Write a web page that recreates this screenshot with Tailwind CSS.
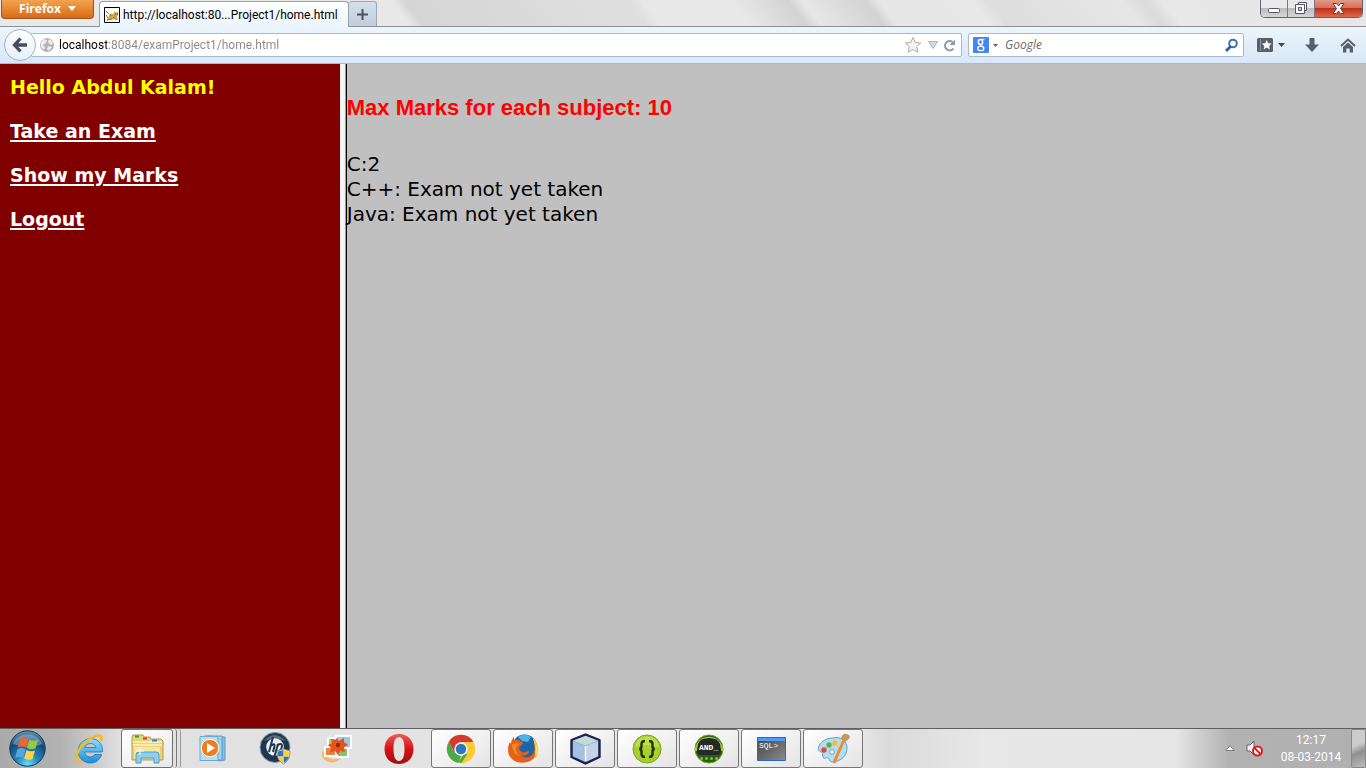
<!DOCTYPE html>
<html lang="en">
<head>
<meta charset="utf-8">
<title>home.html</title>
<script src="https://cdn.jsdelivr.net/npm/@tailwindcss/browser@4"></script>
</head>
<body class="flex h-screen flex-col overflow-hidden bg-[#c0c0c0] font-['Noto_Sans','Open_Sans',sans-serif] text-[12px]">

<!-- Title bar -->
<header class="flex h-[27px] shrink-0 items-start border-b border-[#8e8e8e] bg-[linear-gradient(52deg,#e9e9e9_0px,#e8e8e8_324px,#d5d5d5_334px,#e0e0e0_512px,#e8e8e8_522px,#e8e8e8_592px,#d3d3d3_636px,#e7e7e7_648px,#d3d3d3_697px,#e7e7e7_708px,#e8e8e8_782px,#dedede_794px,#e6e6e6_900px,#dadada_916px,#e8e8e8_932px,#e6e6e6_1090px)] pl-px">
  <button class="flex h-[19px] w-[93px] items-center justify-center gap-[7px] rounded-b-[4px] border border-t-0 border-[#a2541a] bg-linear-to-b from-[#f0a34d] to-[#da6a10] pb-px font-['Open_Sans',sans-serif] text-[12px] leading-none font-bold text-white">Firefox
    <svg class="h-[5px] w-[8px]" viewBox="0 0 8 5"><path d="M0 0h8L4 5z" fill="#fff"/></svg>
  </button>
  <nav class="ml-[5px] flex h-[27px] items-start pt-px">
    <a href="#" class="flex h-[26px] w-[250px] items-center gap-[3px] rounded-t-[4px] border border-b-0 border-[#98a0a8] bg-linear-to-b from-white to-[#ebf4fc] pl-1 font-['Roboto',sans-serif] whitespace-nowrap text-black">
      <svg class="size-4 shrink-0" viewBox="0 0 16 16"><path d="M.5.5h15v15H.5z" fill="#fff" stroke="#000" /><path d="M4 11l2-4 4 0 0-3 1.500 1.500h1.500L14 4v4l-1 2 1 3-3-1-4 1-5 .5z" fill="#d2a44c"/><path d="M2 4l3 3M2 8l2 3M6 7l1 2M9 10l4 3M3 13l5-1" stroke="#8b7550"/><path d="M11 7h1M13 7h1" stroke="#333"/></svg>
      <span>http://localhost:80...Project1/home.html</span>
    </a>
    <button aria-label="New tab" class="flex h-[25px] w-[28px] items-center justify-center rounded-t-[3px] border border-b-0 border-l-0 border-[#9aa6b4] bg-linear-to-b from-[#d5e0ec] to-[#bfcddc]">
      <svg class="size-[11px]" viewBox="0 0 11 11"><path d="M5.5 0v11M0 5.5h11" stroke="#4b5560" stroke-width="2"/></svg>
    </button>
  </nav>
  <div class="mr-[3px] ml-auto flex h-[18px] overflow-hidden rounded-b-[5px] border border-t-0 border-[#63636b]">
    <button aria-label="Minimize" class="flex w-[27px] items-center justify-center border-r border-[#77777f] bg-[linear-gradient(#e9e9e9_45%,#bcbcbe_50%,#d6d6d6)] pt-1">
      <svg class="h-[5px] w-[12px]" viewBox="0 0 12 5"><rect x=".5" y=".5" width="11" height="4" rx="1" fill="#fff" stroke="#55556a"/></svg>
    </button>
    <button aria-label="Restore" class="flex w-[27px] items-center justify-center border-r border-[#77777f] bg-[linear-gradient(#e9e9e9_45%,#bcbcbe_50%,#d6d6d6)] pb-px">
      <svg class="size-[12px]" viewBox="0 0 12 12" stroke="#55556a"><path d="M3.500 .5h8v8h-8z" fill="#fff"/><path d="M.5 2.500h9v9h-9z" fill="#fff"/><path d="M3.500 5.500h3v3h-3z" fill="#ccc"/></svg>
    </button>
    <button aria-label="Close" class="flex w-[47px] items-center justify-center bg-[linear-gradient(#e39a86_0%,#d6705a_45%,#bf2f1a_50%,#dd6a48)] pb-px">
      <svg class="h-[11px] w-[13px]" viewBox="0 0 13 11"><path d="M1 .5h3.500l2 2.500 2-2.500H12L8.500 5.500l3.500 5H8.500l-2-2.500-2 2.500H1l3.500-5z" fill="#fff" stroke="#55424f" stroke-linejoin="round"/></svg>
    </button>
  </div>
</header>

<!-- Navigation toolbar -->
<div class="flex h-[37px] shrink-0 items-center border-b border-[#a3b9d4] bg-linear-to-b from-[#ebf5fc] to-[#d8e7f8] pl-1">
  <button aria-label="Back" class="relative z-10 flex size-8 shrink-0 items-center justify-center rounded-full border border-[#a0b2c8] bg-linear-to-b from-white to-[#e6eff8]">
    <svg class="h-[16px] w-[16px]" viewBox="0 0 16 16"><path d="M8.500 1.500L2.500 8l6 6.500M2.500 8H15" fill="none" stroke="#434f5e" stroke-width="3.300"/></svg>
  </button>
  <div class="-ml-[5px] flex h-6 min-w-0 flex-1 items-center rounded-r-[2px] border border-[#a9bacf] bg-white pl-[7px]">
    <svg class="mr-1 size-4 shrink-0" viewBox="0 0 16 16"><circle cx="8" cy="8" r="7" fill="#b3b3b3"/><path d="M2 5l3-3 3 1-1 3-3 2 2 2-1 3-3-3zM10 2l4 3-1 3-3-1-1-3zM9 9l4 1-3 4-2-2z" fill="#ececec"/></svg>
    <input aria-label="Address" value="localhost:8084/examProject1/home.html" class="min-w-0 flex-1 bg-[linear-gradient(90deg,#000_48px,#888_48px)] bg-clip-text font-['Roboto',sans-serif] text-[12px] text-transparent outline-none">
    <button aria-label="Bookmark this page"><svg class="size-[18px]" viewBox="0 0 18 18"><path d="M9 1.500l2.300 5 5.400.6-4 3.700 1.100 5.400L9 13.500l-4.800 2.700 1.100-5.400-4-3.700 5.400-.6z" fill="#f5f5f5" stroke="#aaa" stroke-linejoin="round"/></svg></button>
    <button aria-label="History" class="ml-1.5"><svg class="h-2 w-[10px]" viewBox="0 0 10 8"><path d="M.5.5h9L5 7.500z" fill="#d3dae3" stroke="#aab3c0"/></svg></button>
    <button aria-label="Reload" class="mr-[5px] ml-[5px]"><svg class="size-[13px]" viewBox="0 0 13 13"><path d="M10.500 9.500A4.700 4.700 0 1 1 9.500 3" fill="none" stroke="#8c9aaa" stroke-width="2"/><path d="M12 .5v5.500h-5.500z" fill="#8c9aaa"/></svg></button>
  </div>
  <div class="ml-1.5 flex h-6 w-[276px] items-center rounded-[2px] border border-[#a9bacf] bg-white px-1">
    <svg class="size-4 shrink-0" viewBox="0 0 16 16"><rect width="16" height="16" rx="1" fill="#4285f4"/><ellipse cx="7.500" cy="4.900" rx="2.200" ry="2.500" fill="none" stroke="#fff" stroke-width="1.500"/><path d="M8.500 2.300h3M7.500 7.400c-1.500.8 1.200 1.200 2 2" stroke="#fff" fill="none"/><ellipse cx="7.800" cy="11.400" rx="3" ry="2.200" fill="none" stroke="#fff" stroke-width="1.300"/></svg>
    <svg class="ml-1 h-[3px] w-[5px] shrink-0" viewBox="0 0 5 3"><path d="M0 0h5L2.500 3z" fill="#666"/></svg>
    <input aria-label="Search" placeholder="Google" class="ml-[7px] min-w-0 flex-1 font-['Open_Sans',sans-serif] text-[12px] italic outline-none placeholder:text-[#6b6b6b]">
    <button aria-label="Go"><svg class="size-[15px]" viewBox="0 0 15 15"><circle cx="9" cy="5.500" r="3.800" fill="none" stroke="#3a73ae" stroke-width="2"/><path d="M6.500 8.500L2 13" stroke="#2a5e9b" stroke-width="2.600"/></svg></button>
  </div>
  <button aria-label="Bookmarks" class="ml-[13px] flex items-center gap-[5px]">
    <svg class="h-[14px] w-4" viewBox="0 0 16 14"><rect width="16" height="14" rx="1.500" fill="#56616e"/><path d="M3.500 1v12" stroke="#8d97a2"/><path d="M9.700 2l1.500 3.200 3.400.4-2.500 2.300.8 3.500-3.200-1.800-3.100 1.800.8-3.500L4.900 5.600l3.400-.4z" fill="#fff"/></svg>
    <svg class="h-[4px] w-[7px]" viewBox="0 0 7 4"><path d="M0 0h7L3.500 4z" fill="#3e4852"/></svg>
  </button>
  <button aria-label="Downloads" class="ml-5"><svg class="size-[14px]" viewBox="0 0 14 14"><path d="M4.500 0h5v6.500H14L7 14 0 6.500h4.500z" fill="#56616e"/></svg></button>
  <button aria-label="Home" class="mr-2.5 ml-[21px]"><svg class="h-[15px] w-4" viewBox="0 0 16 15"><path d="M1 8l7-6.500L15 8" fill="none" stroke="#56616e" stroke-width="2"/><path d="M3 9l5-4.500L13 9V14.500H9.700v-4H6.300v4H3z" fill="#56616e"/></svg></button>
</div>

<!-- Frameset -->
<div class="grid min-h-0 flex-1 grid-cols-[1fr_7px_3fr] font-[Verdana,'DejaVu_Sans',sans-serif] text-[20px]">
  <aside class="flex flex-col items-start gap-5 bg-[#800000] px-2.5 pt-[11px] text-[19px] leading-6 font-bold">
    <p class="text-[#ffff00]">Hello Abdul Kalam!</p>
    <a href="#" class="text-white underline decoration-2 underline-offset-2">Take an Exam</a>
    <a href="#" class="text-white underline decoration-2 underline-offset-2">Show my Marks</a>
    <a href="#" class="text-white underline decoration-2 underline-offset-2">Logout</a>
  </aside>
  <div class="border-r border-black bg-[linear-gradient(90deg,#f0f0f0_2px,#fff_2px,#fff_3px,#f0f0f0_3px,#f0f0f0_5px,#a0a0a0_5px)]"></div>
  <main class="bg-[#c0c0c0] pt-[31px] leading-[25px] text-black">
    <h1 class="mb-[31px] font-[Arial,'Liberation_Sans',sans-serif] text-[22px] leading-[26px] font-bold text-[#ff0000]">Max Marks for each subject: 10</h1>
    <p>C:2</p>
    <p>C++: Exam not yet taken</p>
    <p>Java: Exam not yet taken</p>
  </main>
</div>

<!-- Taskbar -->
<footer class="flex h-10 shrink-0 border-t border-[#5e5e5e] bg-[linear-gradient(90deg,#aaa_0px,#b2b2b2_60px,#c8c8c8_90px,#e0e0e0_120px,#e6e6e6_50%,#e6e6e6_63%,#dadada_65%,#e8e8e8_72%,#e6e6e6_86%,#b2b2b2_90%,#b0b0b0)]">
  <nav class="flex gap-0.5">
    <button aria-label="Start" class="flex w-[57px] items-center justify-center pr-[3px]">
      <svg class="size-[37px]" viewBox="0 0 37 37"><defs><radialGradient id="orb" cx=".5" cy=".95" r=".9"><stop stop-color="#5fe4ff"/><stop offset=".35" stop-color="#2487b9"/><stop offset=".75" stop-color="#154a78"/><stop offset="1" stop-color="#5d88a8"/></radialGradient></defs><circle cx="18.500" cy="18.500" r="17.700" fill="url(#orb)" stroke="#173955"/><path d="M4 14C8 2 28 1 33 14c-9 4-20 3-29 0z" fill="#c9e4f0" opacity=".35"/><path d="M11 9c3-1.800 5.500-1.600 8.300-.3l-2.300 8.800c-2.600-1.500-5-1.400-8.200 0z" fill="#ed6430"/><path d="M20.300 9.500c2.700 1.500 5.200 1.600 8.700.3l-2.500 8.500c-2.700 1.300-5.300 1.200-8.500-.3z" fill="#96c93f"/><path d="M8.300 19.200c3-1.500 5.400-1.400 8.300 0l-2.300 8.800c-2.500-1.500-5.200-1.500-8.300 0z" fill="#57a4e0"/><path d="M17.500 20.100c2.700 1.500 5.200 1.500 8.500.3l-2.500 8.500c-2.700 1.300-5.100 1.200-8.300-.3z" fill="#ffd24a"/></svg>
    </button>
    <button aria-label="Internet Explorer" class="flex w-[60px] items-center justify-center">
      <svg class="size-8" viewBox="0 0 32 32"><defs><linearGradient id="ie" x2="0" y2="1"><stop stop-color="#8fdcfb"/><stop offset="1" stop-color="#1f8fd6"/></linearGradient></defs><path d="M29.500 19H11.500c.5 5.500 8 6.500 10 2.500h7.200C26 29.500 19 31 14 29.500 6.500 27.500 3.500 20 6 13.500 8.500 7.500 15 4.500 21 6c6 1.700 9 6.500 8.500 13zM11.800 14.500h11c-.7-5-9.500-5.500-11 0z" fill="url(#ie)" stroke="#1c77bd" stroke-width=".8"/><path d="M28 8c1-3.500.5-6-3-5.500C17 3.500 4 15 3 25c-.3 4 2.500 5 6 3.500" fill="none" stroke="#f3bb20" stroke-width="2.600"/></svg>
    </button>
    <button aria-label="Windows Explorer" class="flex w-[60px]">
      <span class="flex h-[39px] w-[52px] items-center justify-center rounded-[3px] border border-[#6e6e6e] bg-linear-to-br from-white to-[#e8e8e8]">
        <svg class="h-[30px] w-[34px]" viewBox="0 0 34 30"><path d="M2 3l1-2h10l1 2h6l1 2h10l2 2v19H2z" fill="#e9d27c" stroke="#b99b45"/><path d="M3 8h29M3 11h29" stroke="#fff4c0" stroke-width="1.500"/><path d="M4 13h26v12H4z" fill="#f7e79e"/><path d="M5 2.500h4" stroke="#25a53b" stroke-width="2"/><path d="M13 4.500h4" stroke="#d8392b" stroke-width="2"/><path d="M22 6.500h5" stroke="#2a82d6" stroke-width="2"/><path d="M6 29V21q0-3 3-3h17q3 0 3 3v8h-5v-5H11v5z" fill="#8ed0ec" stroke="#4a9dc6"/><path d="M10 13v8M6 17h8" stroke="#fff"/></svg>
      </span>
      <span class="h-[39px] w-1 rounded-r-[3px] border-r border-[#777]"></span>
      <span class="h-[39px] w-1 rounded-r-[3px] border-r border-[#999]"></span>
    </button>
    <button aria-label="Media Player" class="flex w-[60px] items-center justify-center">
      <svg class="h-[27px] w-[28px]" viewBox="0 0 28 27"><path d="M8 1l18 1v23l-6 1z" fill="#85bfdf" stroke="#5d9cc3"/><path d="M5 1h18v24H5z" fill="#a4d2ea" stroke="#5d9cc3"/><path d="M1 1.500h18v24H1z" fill="#b9deef" stroke="#6ba9cd"/><circle cx="11" cy="13" r="8.700" fill="#f07c20" stroke="#fff"/><path d="M8 8l8 5-8 5z" fill="#fff"/></svg>
    </button>
    <button aria-label="HP Support Assistant" class="flex w-[60px] items-center justify-center">
      <svg class="size-[33px]" viewBox="0 0 33 33"><circle cx="16" cy="15.500" r="15" fill="#20364c" stroke="#8597a6"/><path d="M5 9Q15-3 27 9 16 5 5 9z" fill="#6c8296" opacity=".7"/><circle cx="16" cy="15" r="8.800" fill="#e9eff4"/><path d="M14 5L10 20M11.500 14q5-4 3.800 1L14 20M19 12l-4 14M18.500 13q6-3 4 3-2 5-6 3.500" fill="none" stroke="#20364c" stroke-width="2"/><path d="M18 19l6.500-2 6.500 2c0 7-2 10-6.500 13C20 29 18 26 18 19z" fill="#fff" stroke="#888"/><path d="M24.500 18v6.500H19c-.3-2-.3-3 0-5zM24.500 24.500H30c-.8 3-2.500 5-5.500 6.500z" fill="#2d74c9"/><path d="M24.500 18l5.500 1.500c.3 2 .3 3 0 5h-5.500zM19 24.500h5.500V31c-3-1.500-4.700-3.500-5.500-6.500z" fill="#ffcf2e"/></svg>
    </button>
    <button aria-label="Photo Gallery" class="flex w-[60px] items-center justify-center">
      <svg class="h-[30px] w-[31px]" viewBox="0 0 31 30"><path d="M1 16c1 8 9 11 18 8-4 5-11 6-16 2-4-3-4-7-2-10z" fill="#f4b860"/><path d="M6 4h11v9H6z" fill="#a9cd7d" stroke="#fff" stroke-width="2"/><path d="M3 13h11v9H3z" fill="#e8854a" stroke="#fff" stroke-width="2"/><path d="M15 14h11v9H15z" fill="#8cbf6a" stroke="#fff" stroke-width="2"/><path d="M14 2h15v12H14z" fill="#9cc6e8" stroke="#fff" stroke-width="2"/><path d="M15 4l2 3 5-3 0 4 4 3-4 2 1 5-5-1-2 4-3-4-5 2 1-5-3-3 4-2-1-4 4 1z" fill="#e2551b"/><circle cx="16" cy="11" r="2.200" fill="#8b2b12"/></svg>
    </button>
    <button aria-label="Opera" class="flex w-[60px] items-center justify-center">
      <svg class="size-8" viewBox="0 0 32 32"><defs><linearGradient id="op" x2="0" y2="1"><stop stop-color="#f35a55"/><stop offset=".5" stop-color="#d41217"/><stop offset="1" stop-color="#a90b0f"/></linearGradient></defs><path fill-rule="evenodd" d="M16 1c9 0 14.500 6.500 14.500 15S25 31 16 31 1.500 24.500 1.500 16 7 1 16 1zm0 3c-4 0-5.500 5-5.500 12S12 28 16 28s5.500-5 5.500-12S20 4 16 4z" fill="url(#op)"/></svg>
    </button>
    <button aria-label="Chrome" class="flex w-[60px] items-center justify-center rounded-[3px] border border-[#777] bg-linear-to-br from-white to-[#e4e4e4]">
      <svg class="size-[30px]" viewBox="0 0 30 30"><circle cx="15" cy="15" r="14.200" fill="#fccb2f"/><path d="M2.700 8A14.200 14.200 0 0 1 27.400 8H15l-6.400 10z" fill="#d53b33"/><path d="M2.700 8l6.200 10.700L15 22l-2.400 7A14.200 14.200 0 0 1 2.700 8z" fill="#4aa84e"/><path d="M20 19.500l-6 9" stroke="#4aa84e" stroke-width="3"/><circle cx="15" cy="15" r="6.700" fill="#f3f3f3"/><circle cx="15" cy="15" r="5.200" fill="#2f78bd"/></svg>
    </button>
    <button aria-label="Firefox window" class="flex w-[60px] items-center justify-center rounded-[3px] border border-[#777] bg-linear-to-br from-white to-[#e4e4e4]">
      <svg class="size-8" viewBox="0 0 32 32"><circle cx="17.500" cy="14" r="12.500" fill="#1b66a8"/><path d="M11 4q6-5 13 0l-3 5-6-1z" fill="#4db2e4"/><path d="M27 6c5 7 4 17-2 21-6 4-16 4-21-2C0 21 .5 13 3 9l1 2c0-3 1-5 3-7v3c2-1 5-.5 6.500 1.500 2 .5 3 1 2 3l-3 2c-1 3 1 6 4 6 2 0 3-2 6-1-1 3-5 5-9 4 6 4 13 1 14-6 .5-3 0-7-.5-10.500z" fill="#e5611b"/><path d="M26.500 6c4.500 5 6 13 1.500 19 1-6 1-13-1.500-19z" fill="#ffe04a" stroke="#ffca30"/><path d="M5 12q4-3 7-1l-3 3q-1 6 4 9-7-1-8-11z" fill="#f08a28"/></svg>
    </button>
    <button aria-label="NetBeans" class="flex w-[60px] items-center justify-center rounded-[3px] border border-[#777] bg-linear-to-br from-white to-[#e4e4e4]">
      <svg class="h-8 w-[31px]" viewBox="0 0 31 32"><path d="M15.500 1.500L29.500 7v17L15.500 30.500 1.500 24V7z" fill="#8da9cf" stroke="#1c2250" stroke-width="2.400" stroke-linejoin="round"/><path d="M15.500 3L28 7.800 15.500 12.500 3 7.800z" fill="#c3dcd8"/><path d="M3 8.500l12 4.500v15.500L3 23z" fill="#a6c0e4"/><path d="M16 13l12-4.500V23l-12 5.500z" fill="#c3d4e8"/><path d="M15.500 13v15" stroke="#f5faff" stroke-width="1.500"/></svg>
    </button>
    <button aria-label="Brackets" class="flex w-[60px] items-center justify-center rounded-[3px] border border-[#777] bg-linear-to-br from-white to-[#e4e4e4]">
      <svg class="size-[30px]" viewBox="0 0 30 30"><circle cx="15" cy="15" r="14" fill="#a6d12a" stroke="#7da01f"/><path d="M3 13Q5 3 15 2.500 25 3 27 13 15 9 3 13z" fill="#c7e660" opacity=".7"/><path d="M13 7q-3.500 0-3.500 3v2.500q0 2-2 2.500 2 .5 2 2.500V20q0 3 3.500 3M17 7q3.500 0 3.500 3v2.500q0 2 2 2.500-2 .5-2 2.500V20q0 3-3.500 3" fill="none" stroke="#26300e" stroke-width="2.400"/></svg>
    </button>
    <button aria-label="AND console" class="flex w-[60px] items-center justify-center rounded-[3px] border border-[#777] bg-linear-to-br from-white to-[#e4e4e4]">
      <svg class="size-[30px]" viewBox="0 0 30 30"><circle cx="15" cy="15" r="14" fill="#285e16" stroke="#6f9b24"/><path d="M2 17A13 13 0 1 1 28 17" fill="none" stroke="#9cc934" stroke-width="2.500"/><path d="M4 10Q6 4 15 4t11 6l1 7q0 4-4 4H7q-4 0-4-4z" fill="#252a28"/><path d="M7.500 24.500h16" stroke="#84bb33" stroke-width="3" stroke-linecap="round" stroke-dasharray="0 5"/><text x="5" y="16" fill="#fff" font-family="Liberation Mono" font-weight="bold" font-size="8">AND_</text></svg>
    </button>
    <button aria-label="SQL command line" class="flex w-[60px] items-center justify-center rounded-[3px] border border-[#777] bg-linear-to-br from-white to-[#e4e4e4]">
      <svg class="h-6 w-[29px]" viewBox="0 0 29 24"><defs><linearGradient id="sq" x2="1" y2="1"><stop stop-color="#444"/><stop offset="1" stop-color="#8b8b8b"/></linearGradient></defs><path d="M.5.5h28v23H.5z" fill="url(#sq)" stroke="#2166d8"/><path d="M1 1h27v3H1z" fill="#4c9bff"/><text x="2" y="11" fill="#fff" font-family="Liberation Mono" font-size="8">SQL&gt;</text></svg>
    </button>
    <button aria-label="Paint" class="flex w-[60px] items-center justify-center rounded-[3px] border border-[#777] bg-linear-to-br from-white to-[#e4e4e4]">
      <svg class="h-8 w-[33px]" viewBox="0 0 33 32"><path d="M16 5c8-2 14 3 14 10 0 8-6 13-14 14-4 0-3-3-5-4s-4 2-5-1 1-4-2-5c-5-2-2-8 2-11 3-2 6-3 10-3z" fill="#b5ddf2" stroke="#5c9fc9"/><circle cx="7" cy="17" r="2.700" fill="#df4a43"/><circle cx="12" cy="12" r="2.700" fill="#59b24d"/><circle cx="18" cy="10" r="2.700" fill="#f3bc35"/><circle cx="15" cy="19" r="2.300" fill="#fff" stroke="#5c9fc9"/><path d="M27 7L19 25 17 30" fill="none" stroke="#ef8b31" stroke-width="3"/><path d="M24 5q2-5 5-4 3 0 4 3-2 4-6 5z" fill="#c39865"/></svg>
    </button>
  </nav>
  <div class="ml-auto flex items-center text-white">
    <button aria-label="Show hidden icons"><svg class="h-[7px] w-[10px]" viewBox="0 0 10 7"><path d="M5 .7L9 5.500H1z" fill="#fff" stroke="#6a6a6a" stroke-width=".8"/></svg></button>
    <button aria-label="Volume muted" class="ml-[11px]"><svg class="h-[17px] w-[18px]" viewBox="0 0 18 17"><path d="M1 5h3l4-4v14l-4-4H1z" fill="#f4f4f4" stroke="#666"/><circle cx="11.500" cy="11" r="4.500" fill="#fff" stroke="#d91e1e" stroke-width="2"/><path d="M8.500 8l6 6" stroke="#d91e1e" stroke-width="2"/></svg></button>
    <button class="ml-[15px] w-16 text-center font-['Roboto',sans-serif] text-[12px] leading-[17px] whitespace-nowrap text-white">12:17<br>08-03-2014</button>
    <button aria-label="Show desktop" class="ml-2 h-[39px] w-[15px] rounded-[2px] border border-[#888] bg-[linear-gradient(155deg,#ccc_40%,#8f8f8f_60%,#bbb)]"></button>
  </div>
</footer>
</body>
</html>
